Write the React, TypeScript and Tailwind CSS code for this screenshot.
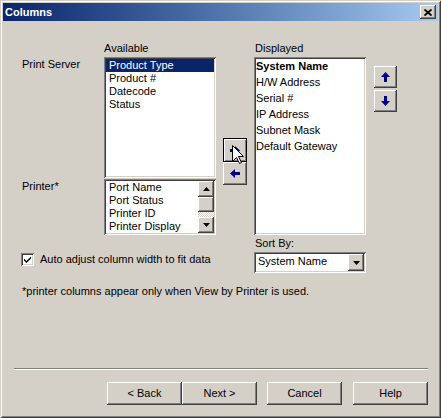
import React from 'react';

const raised =
  'bg-[#d4d0c8] shadow-[inset_-1px_-1px_0_#404040,inset_1px_1px_0_#ffffff,inset_-2px_-2px_0_#808080,inset_2px_2px_0_#d4d0c8]';
const sunken =
  'p-[2px] bg-white shadow-[inset_1px_1px_0_#808080,inset_-1px_-1px_0_#ffffff,inset_2px_2px_0_#404040,inset_-2px_-2px_0_#d4d0c8]';

const navy = '#000080';

function UpArrow() {
  return (
    <svg width="9" height="10" viewBox="0 0 9 10">
      <path d="M4.5 0L9 5H6V10H3V5H0Z" fill={navy} />
    </svg>
  );
}

function DownArrow() {
  return (
    <svg width="9" height="10" viewBox="0 0 9 10">
      <path d="M4.5 10L9 5H6V0H3V5H0Z" fill={navy} />
    </svg>
  );
}

function LeftArrow() {
  return (
    <svg width="10" height="9" viewBox="0 0 10 9">
      <path d="M0 4.5L5 0V3H10V6H5V9Z" fill={navy} />
    </svg>
  );
}

function RightArrow() {
  return (
    <svg width="10" height="9" viewBox="0 0 10 9">
      <path d="M10 4.5L5 0V3H0V6H5V9Z" fill={navy} />
    </svg>
  );
}

function Tri({ down }: { down?: boolean }) {
  return (
    <svg width="7" height="4" viewBox="0 0 7 4">
      <path d={down ? 'M0 0H7L3.5 4Z' : 'M0 4H7L3.5 0Z'} fill="#000" />
    </svg>
  );
}

function Cursor() {
  return (
    <svg
      width="13"
      height="20"
      viewBox="0 0 13 20"
      className="absolute left-[8px] top-[6px]"
    >
      <path
        d="M0.5 0.5V16.5L4.5 12.5L7.5 18.5L9.5 17.5L6.5 11.5H11.5Z"
        fill="#fff"
        stroke="#000"
        strokeWidth="1"
      />
    </svg>
  );
}

const available = ['Product Type', 'Product #', 'Datecode', 'Status'];
const printer = ['Port Name', 'Port Status', 'Printer ID', 'Printer Display'];
const displayed = ['System Name', 'H/W Address', 'Serial #', 'IP Address', 'Subnet Mask', 'Default Gateway'];

export default function App() {
  return (
    <div className="w-[441px] h-[418px] p-[3px] bg-[#d4d0c8] shadow-[inset_1px_1px_0_#d4d0c8,inset_-1px_-1px_0_#404040,inset_2px_2px_0_#ffffff,inset_-2px_-2px_0_#808080] flex flex-col text-[11px] leading-[13px] text-black font-['Liberation_Sans',Arial,sans-serif] select-none">
      {/* title bar */}
      <div className="h-[18px] shrink-0 flex items-center justify-between pl-[2px] pr-[2px] bg-gradient-to-r from-[#0a246a] to-[#a6caf0]">
        <span className="font-bold text-white">Columns</span>
        <div className={`w-[16px] h-[14px] flex items-center justify-center ${raised}`}>
          <svg width="8" height="7" viewBox="0 0 8 7">
            <path d="M0.5 0.5L7.5 6.5M7.5 0.5L0.5 6.5" stroke="#000" strokeWidth="1.8" />
          </svg>
        </div>
      </div>

      <div className="flex flex-col pl-[19px] pt-[21px]">
        <div className="flex items-start">
          <div className="flex flex-col">
            <div className="flex items-start">
              <div className="w-[82px] flex flex-col pt-[16px]">
                <span className="h-[13px]">Print Server</span>
                <span className="mt-[109px]">Printer*</span>
              </div>

              <div className="w-[112px] flex flex-col">
                <div className="h-[15px]">Available</div>
                <div className={`h-[121px] ${sunken}`}>
                  {available.map((item, i) => (
                    <div
                      key={item}
                      className={
                        i === 0
                          ? 'h-[13px] pl-[3px] bg-[#0a246a] text-white'
                          : 'h-[13px] pl-[3px]'
                      }
                    >
                      {item}
                    </div>
                  ))}
                </div>
                <div className={`mt-[1px] h-[56px] flex ${sunken}`}>
                  <div className="flex-1 overflow-hidden">
                    {printer.map((item) => (
                      <div key={item} className="h-[13px] pl-[3px] whitespace-nowrap">
                        {item}
                      </div>
                    ))}
                  </div>
                  <div className="w-[16px] flex flex-col">
                    <div className={`h-[16px] flex items-center justify-center ${raised}`}>
                      <Tri />
                    </div>
                    <div className={`h-[15px] ${raised}`} />
                    <div className="h-[5px] bg-[image:repeating-conic-gradient(#ffffff_0_25%,#d4d0c8_0_50%)] bg-[length:2px_2px]" />
                    <div className={`h-[16px] flex items-center justify-center ${raised}`}>
                      <Tri down />
                    </div>
                  </div>
                </div>
              </div>

              <div className="ml-[7px] pt-[96px] flex flex-col">
                <div className="relative w-[24px] h-[24px] border border-black bg-[#d4d0c8] shadow-[inset_1px_1px_0_#ffffff,inset_-1px_-1px_0_#808080] flex items-center justify-center">
                  <RightArrow />
                  <Cursor />
                </div>
                <div className={`w-[24px] h-[23px] flex items-center justify-center ${raised}`}>
                  <LeftArrow />
                </div>
              </div>
            </div>

            <div className="mt-[18px] -ml-px flex items-center">
              <div className={`w-[13px] h-[13px] flex items-center justify-center ${sunken}`}>
                <svg width="7" height="7" viewBox="0 0 7 7">
                  <path d="M0 2.5L2.5 5L7 0.5V2.5L2.5 7L0 4.5Z" fill="#000" />
                </svg>
              </div>
              <span className="ml-[6px]">Auto adjust column width to fit data</span>
            </div>
          </div>

          <div className="ml-[7px] w-[112px] flex flex-col">
            <div className="h-[15px] pl-px">Displayed</div>
            <div className={`h-[178px] ${sunken}`}>
              {displayed.map((item, i) => (
                <div
                  key={item}
                  className={i === 0 ? 'h-[16px] leading-[14px] font-bold' : 'h-[16px] leading-[14px]'}
                >
                  {item}
                </div>
              ))}
            </div>
            <div className="h-[17px] pt-[2px] pl-px">Sort By:</div>
            <div className={`h-[21px] flex ${sunken}`}>
              <span className="flex-1 pl-[2px] leading-[15px]">System Name</span>
              <div className={`w-[16px] h-[17px] flex items-center justify-center ${raised}`}>
                <Tri down />
              </div>
            </div>
          </div>

          <div className="ml-[8px] pt-[24px] flex flex-col gap-[2px]">
            <div className={`w-[23px] h-[22px] flex items-center justify-center ${raised}`}>
              <UpArrow />
            </div>
            <div className={`w-[23px] h-[22px] flex items-center justify-center ${raised}`}>
              <DownArrow />
            </div>
          </div>
        </div>

        <p className="mt-[12px]">*printer columns appear only when View by Printer is used.</p>

        <div className="-ml-[8px] w-[414px] flex flex-col">
          <div className="mt-[70px] h-[2px] border-t border-t-[#808080] border-b border-b-white" />
          <div className="mt-[12px] flex justify-end">
            <div className={`w-[75px] h-[23px] flex items-center justify-center ${raised}`}>&lt; Back</div>
            <div className={`w-[75px] h-[23px] flex items-center justify-center ${raised}`}>Next &gt;</div>
            <div className={`ml-[10px] w-[75px] h-[23px] flex items-center justify-center ${raised}`}>Cancel</div>
            <div className={`ml-[11px] w-[75px] h-[23px] flex items-center justify-center ${raised}`}>Help</div>
          </div>
        </div>
      </div>
    </div>
  );
}
